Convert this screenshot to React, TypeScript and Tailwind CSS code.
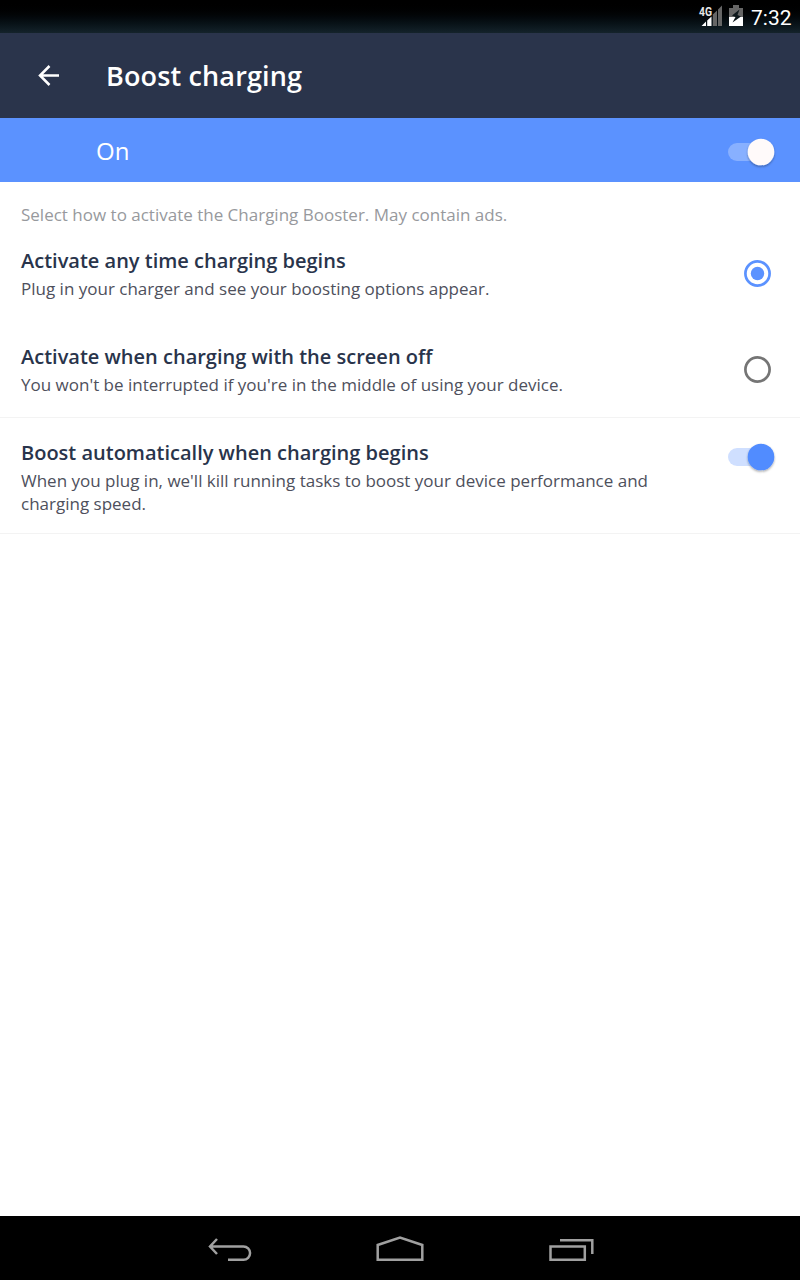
import React from "react";

function Switch({ light }: { light?: boolean }) {
  return (
    <svg width="60" height="44" viewBox="0 0 60 44" className="shrink-0">
      <defs>
        <filter id={light ? "s1" : "s2"} x="-30%" y="-30%" width="160%" height="160%">
          <feDropShadow dx="0" dy="1.3" stdDeviation="1" floodColor="#000" floodOpacity="0.35" />
        </filter>
      </defs>
      <rect x="8" y="13" width="44" height="18" rx="9" fill={light ? "#fff" : "#518cff"} opacity="0.28" />
      <circle cx="41" cy="22" r="13.3" fill={light ? "#fffafa" : "#518cff"} filter={light ? "url(#s1)" : "url(#s2)"} />
    </svg>
  );
}

function Radio({ checked }: { checked?: boolean }) {
  const color = checked ? "#5b92ff" : "#757575";
  return (
    <svg width="28" height="28" viewBox="0 0 28 28" className="shrink-0">
      <circle cx="14.5" cy="14.5" r="12.1" fill="none" stroke={color} strokeWidth="2.7" />
      {checked && <circle cx="14.5" cy="14.5" r="6.7" fill={color} />}
    </svg>
  );
}

function Copy({ title, children }: { title: string; children: React.ReactNode }) {
  return (
    <div>
      <h2 className="text-[20px] leading-[28px] font-semibold text-[#29344b]">{title}</h2>
      <p className="pt-[2px] text-[17px] leading-[23px] text-[#4e505c]">{children}</p>
    </div>
  );
}

export default function App() {
  return (
    <div className="flex h-[1280px] w-[800px] flex-col bg-white font-['Open_Sans',sans-serif]">
      <div className="flex h-[33px] items-start justify-end bg-linear-to-b from-black to-[#14232b]">
        <svg width="50" height="33" viewBox="697 0 50 33">
          <path d="M712.8 14.5L717 10.5V26H712.8ZM718 9.5L722 5.5V26H718Z" fill="#666" />
          <path d="M701.5 26L706 21.500V26ZM707.2 20.500L711.5 16.500V26H707.2Z" fill="#fff" />
          <text x="699" y="15.5" fontSize="12.5" fontWeight="700" fill="#e6e6e6" fontFamily="Roboto" textLength="13" lengthAdjust="spacingAndGlyphs">4G</text>
          <path d="M729 8H733V5H739V8H743V26H729Z" fill="#666" />
          <path d="M729 17H743V26H729Z" fill="#fff" />
          <path d="M739.5 9.5L732 15.5L735.5 17L732.5 22.5L741 16.5L737.500 15Z" fill="#0e181c" />
        </svg>
        <span className="ml-1 w-[49px] pt-[3px] font-['Roboto',sans-serif] text-[21px] leading-[30px] text-white">7:32</span>
      </div>
      <header className="flex h-[85px] items-center bg-[#2a344b] pl-[37px] text-white">
        <svg width="24" height="24" viewBox="0 0 24 24" fill="none" stroke="currentColor" strokeWidth="2.5">
          <path d="M22 11.5H3M12.5 2L3 11.5L12.5 21" />
        </svg>
        <h1 className="ml-[45px] pt-0.5 text-[27px] font-semibold tracking-[0.15px]">Boost charging</h1>
      </header>
      <div className="flex h-16 items-center justify-between bg-[#5b92ff] pt-[3px] pr-5 pl-24 text-white">
        <span className="pb-0.5 text-[24px]">On</span>
        <Switch light />
      </div>
      <main className="grow">
        <p className="h-[65px] pt-[21px] pl-[21px] text-[17px] leading-[23px] text-[#97999d]">Select how to activate the Charging Booster. May contain ads.</p>
        <div className="flex h-24 items-start justify-between pr-[29px] pl-[21px]">
          <Copy title="Activate any time charging begins">Plug in your charger and see your boosting options appear.</Copy>
          <div className="pt-3"><Radio checked /></div>
        </div>
        <div className="flex h-[75px] items-start justify-between border-b border-[#f3f3f3] pr-[29px] pl-[21px]">
          <Copy title="Activate when charging with the screen off">You won't be interrupted if you're in the middle of using your device.</Copy>
          <div className="pt-3"><Radio /></div>
        </div>
        <div className="flex h-[116px] items-start justify-between border-b border-[#f3f3f3] pt-[21px] pr-5 pl-[21px]">
          <Copy title="Boost automatically when charging begins">When you plug in, we'll kill running tasks to boost your device performance and<br />charging speed.</Copy>
          <div className="-mt-1"><Switch /></div>
        </div>
      </main>
      <nav className="flex h-16 bg-black">
        <svg width="800" height="64" viewBox="0 1216 800 64" fill="none" stroke="#a0a0a0" strokeWidth="2.5">
          <path d="M217 1239L210 1246.5L217 1254M210 1246.5H243.500A6.600 6.600 0 0 1 243.500 1259.700H228" />
          <path d="M377.7 1259.7V1245L400 1237.5L422.3 1245V1259.7Z" />
          <path d="M550.5 1246.5H584.800V1259.7H550.5ZM560 1240.2H592.300V1254" />
        </svg>
      </nav>
    </div>
  );
}
